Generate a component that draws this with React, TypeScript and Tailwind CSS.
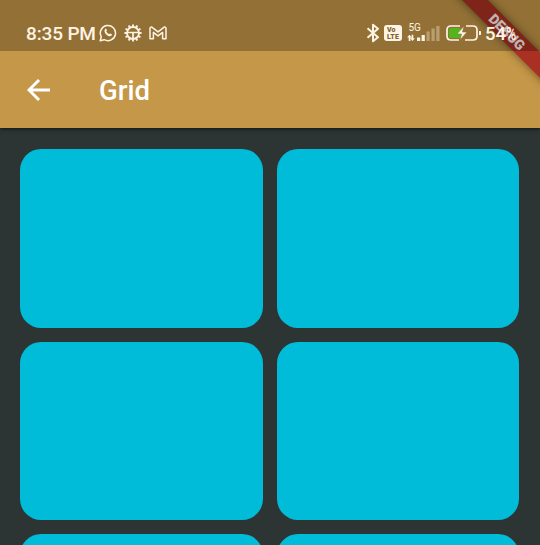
import React from "react";

const cream = "#fff4e4";

function WhatsAppIcon() {
  return (
    <svg className="ml-[3px] h-[18px] w-[18px] shrink-0" viewBox="0 0 18 18" fill="none" stroke={cream}>
      <path d="M1.2 16.8 2.3 12.8A7.6 7.6 0 1 1 5.2 15.7Z" strokeWidth="1.5" strokeLinejoin="round" />
      <path
        d="M6.2 4.9c.5-.4 1-.3 1.2.2l.5 1.2c.1.4-.5.8-.6 1.2.6 1.2 1.5 2.1 2.8 2.7.4-.1.8-.9 1.2-.7l1.4.7c.4.2.2 1-.1 1.4-1.5 1.6-3.9.3-5.3-1.1C5.6 8.8 4.7 6.4 6.2 4.9Z"
        fill={cream}
        stroke="none"
      />
    </svg>
  );
}

function GearIcon() {
  const teeth = Array.from({ length: 12 }, (_, i) => i * 30);
  return (
    <svg className="ml-[7px] h-[18px] w-[18px] shrink-0" viewBox="0 0 18 18" fill="none" stroke={cream}>
      <circle cx="9" cy="9" r="6" strokeWidth="1.8" />
      {teeth.map((a) => (
        <path key={a} d="M9 .4V3" strokeWidth="1.9" transform={`rotate(${a} 9 9)`} />
      ))}
      <path d="M4 8.500h10M9 8.500v5.500" strokeWidth="1.7" />
    </svg>
  );
}

function MailIcon() {
  return (
    <svg className="ml-[7px] h-[14px] w-[18px] shrink-0" viewBox="0 0 18 14" fill="none" stroke={cream} strokeWidth="1.5" strokeLinejoin="round">
      <path d="M1 12.700V2.300Q1.200.8 2.800 1.100L9 5.900 15.200 1.100Q16.800.8 17 2.300V12.700H13.600V6.400L9 9.900 4.400 6.400V12.700Z" />
    </svg>
  );
}

function BluetoothIcon() {
  return (
    <svg className="h-5 w-[13px] shrink-0" viewBox="0 0 13 20" fill="none" stroke={cream} strokeWidth="2">
      <path d="M1.500 5.300 12 14.300 7 18.300V1.700L12 5.700 1.500 14.700" strokeLinejoin="round" />
    </svg>
  );
}

function VoLteIcon() {
  return (
    <span className="ml-[5px] flex h-[16px] w-[18px] shrink-0 flex-col items-center justify-center rounded-[3px] bg-[#fff4e4] font-black text-[#806232]">
      <span className="h-[6px] w-[12px] text-[7px] leading-[6px]">Vo</span>
      <span className="mt-px h-[6px] text-[7px] leading-[6px] tracking-[0.2px]">LTE</span>
    </span>
  );
}

function SignalIcon() {
  return (
    <svg className="ml-[5px] h-[20px] w-[33px] shrink-0" viewBox="0 0 33 20" fill={cream}>
      <text x="1.500" y="8" fontFamily="Roboto, sans-serif" fontSize="10">5G</text>
      <path d="M2.500 11.800 4.900 14.500H3.400v3.500H1.700v-3.500H.1ZM5.500 18 3.100 15.300h1.500v-3.500h1.700v3.500h1.600Z" />
      <rect x="10" y="14.500" width="3.200" height="3.500" />
      <rect x="14.600" y="12" width="3.200" height="6" />
      <g fill="#b99f70">
        <rect x="19.500" y="8.500" width="3.200" height="9.500" />
        <rect x="24.500" y="5.500" width="3.200" height="12.500" />
        <rect x="29.300" y="3" width="3.200" height="15" />
      </g>
    </svg>
  );
}

function BatteryIcon() {
  return (
    <svg className="ml-[6px] h-[16px] w-[36px] shrink-0" viewBox="0 0 36 16" fill="none">
      <rect x="3" y="3" width="12" height="10" rx="1.500" fill="#52b51b" />
      <path d="M14 1H5Q1 1 1 5v6q0 4 4 4h8M20 1h7q4 0 4 4v6q0 4-4 4h-8" stroke={cream} strokeWidth="1.700" />
      <path d="m18 1-7 8h4.500L14 15l7-8h-4.500Z" fill={cream} stroke="#927038" strokeWidth=".6" />
      <path d="M33 6h1.200q.8 0 .8.800v2.400q0 .8-.8.800H33Z" fill={cream} />
    </svg>
  );
}

/* The system bar's scrim and icons are painted above the app's own ribbon. */
function StatusBar() {
  return (
    <div className="relative z-20 flex h-[51px] items-center bg-black/25 pl-[26px] pt-[15px] text-[#fff4e4]">
      <span className="w-[70px] shrink-0 whitespace-nowrap pt-[2px] text-[19px] font-medium leading-5 tracking-[-0.15px]">8:35 PM</span>
      <WhatsAppIcon />
      <GearIcon />
      <MailIcon />
      <div className="ml-auto flex w-[174px] shrink-0 items-center">
        <BluetoothIcon />
        <VoLteIcon />
        <SignalIcon />
        <BatteryIcon />
        <span className="ml-[3px] whitespace-nowrap pt-[2px] text-[18.500px] font-medium leading-5">
          54<span className="inline-block origin-left scale-x-75">%</span>
        </span>
      </div>
    </div>
  );
}

function AppBar() {
  return (
    <div className="flex h-[77px] items-center pl-[27px] text-white">
      <svg className="h-[22px] w-[23px]" viewBox="0 0 23 22" fill="none" stroke="currentColor" strokeWidth="2.900">
        <path d="M23 11H2.200M12 1 2 11l10 10" />
      </svg>
      <h1 className="ml-[49px] pt-[3px] text-[27.500px] font-medium leading-8">Grid</h1>
    </div>
  );
}

function DebugBanner() {
  return (
    <div className="pointer-events-none absolute right-0 top-0 z-10 h-[90px] w-[90px] overflow-hidden">
      <div className="absolute left-[-23px] top-[22.500px] flex h-[18px] w-[160px] rotate-45 items-center justify-center bg-[#a93022] text-[14px] font-black leading-none text-[#fff0ee] shadow-[0_0_8px_rgba(0,0,0,0.5)]">
        DEBUG
      </div>
    </div>
  );
}

export default function App() {
  return (
    <div className="relative h-[545px] w-[540px] overflow-hidden bg-[#2c3533] font-['Roboto',sans-serif]">
      <header className="bg-[#c59748] shadow-[0_1px_4px_rgba(0,0,0,0.65)]">
        <StatusBar />
        <AppBar />
      </header>
      <main className="grid auto-rows-[178.500px] grid-cols-[242.500px_242.500px] gap-[14px] pl-[20.400px] pt-[21px]">
        {Array.from({ length: 6 }, (_, i) => (
          <div key={i} className="rounded-[21px] bg-[#00bcd8]" />
        ))}
      </main>
      <DebugBanner />
    </div>
  );
}
